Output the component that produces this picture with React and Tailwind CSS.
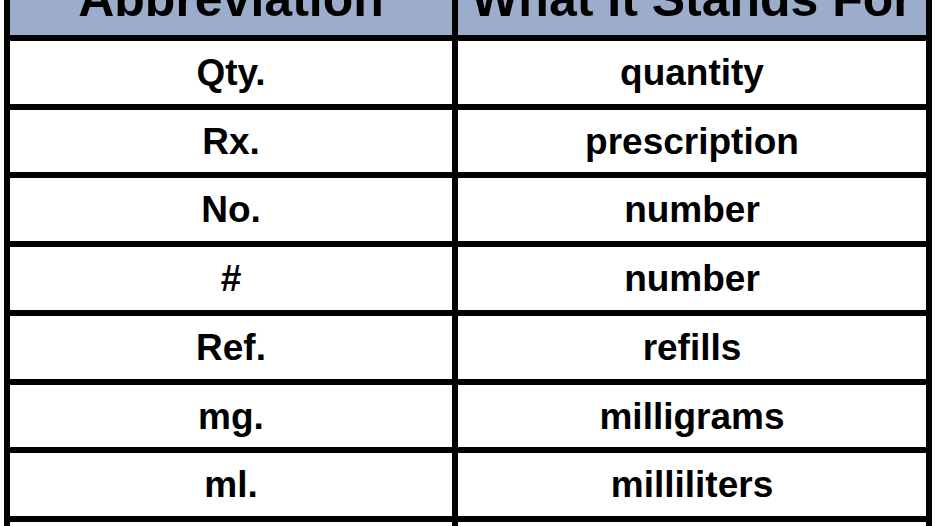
import React from "react";

const rows = [
  ["Qty.", "quantity", "h-[63px]"],
  ["Rx.", "prescription", "h-[62px]"],
  ["No.", "number", "h-[63px]"],
  ["#", "number", "h-[63px]"],
  ["Ref.", "refills", "h-[63px]"],
  ["mg.", "milligrams", "h-[62px]"],
  ["ml.", "milliliters", "h-[63px]"],
];

function Cell({ children, h, header }) {
  return (
    <div
      className={
        header
          ? "h-[61px] bg-[#9cadcb] flex items-end justify-center pb-[11px] text-[50px] leading-none font-bold text-black"
          : `${h} bg-white flex items-center justify-center pt-[1px] text-[37px] font-bold text-black`
      }
    >
      {children}
    </div>
  );
}

export default function App() {
  return (
    <div
      className="w-[935px] h-[526px] overflow-hidden bg-white"
      style={{ fontFamily: '"Liberation Sans", Arial, sans-serif' }}
    >
      <div className="ml-[4px] mt-[-26px] w-[928px] bg-black px-[6px] grid grid-cols-[442px_468px] gap-[6px]">
        <Cell header>Abbreviation</Cell>
        <Cell header>What It Stands For</Cell>
        {rows.map(([a, b, h], i) => (
          <React.Fragment key={i}>
            <Cell h={h}>{a}</Cell>
            <Cell h={h}>{b}</Cell>
          </React.Fragment>
        ))}
        <Cell h="h-[40px]"></Cell>
        <Cell h="h-[40px]"></Cell>
      </div>
    </div>
  );
}
